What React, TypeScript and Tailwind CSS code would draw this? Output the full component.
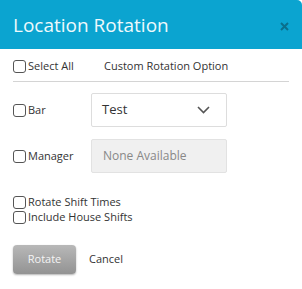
import React from "react";

function Box() {
  return <span className="inline-block w-[13px] h-[13px] border border-[#555] rounded-[3px] bg-white shrink-0" />;
}

export default function App() {
  return (
    <div className="w-[302px] h-[289px] bg-white relative overflow-hidden" style={{ fontFamily: '"Open Sans", sans-serif' }}>
      <div className="h-[49px] bg-[#0ba4d0] rounded-tr-[5px] flex items-center justify-between pl-[13px] pr-[12px]">
        <span className="text-[19px] text-[#eef9fc] leading-none pt-[1px]">Location Rotation</span>
        <svg width="9" height="9" viewBox="0 0 9 9" className="mt-[3px] mr-[1px]"><path d="M1 1l7 7M8 1l-7 7" stroke="#0b6f8c" strokeWidth="2" /></svg>
      </div>
      <div className="px-[13px]">
        <div className="flex items-center h-[33px] border-b border-[#d4d4d4] pt-[3px]">
          <div className="flex items-center w-[91px]">
            <Box />
            <span className="text-[11px] text-[#333] ml-[2px]">Select All</span>
          </div>
          <span className="text-[11px] text-[#333]">Custom Rotation Option</span>
        </div>
        <div className="flex items-center mt-[11px] h-[34px]">
          <div className="flex items-center w-[78px]">
            <Box />
            <span className="text-[11px] text-[#333] ml-[2px]">Bar</span>
          </div>
          <div className="w-[136px] h-[34px] border border-[#ddd] rounded-[2px] flex items-center justify-between pl-[10px] pr-[16px]">
            <span className="text-[13px] text-[#333]">Test</span>
            <svg width="13" height="8" viewBox="0 0 13 8"><path d="M1 1l5.5 5.5L12 1" fill="none" stroke="#555" strokeWidth="1.6" /></svg>
          </div>
        </div>
        <div className="flex items-center mt-[12px] h-[34px]">
          <div className="flex items-center w-[78px]">
            <Box />
            <span className="text-[11px] text-[#333] ml-[2px]">Manager</span>
          </div>
          <div className="w-[136px] h-[34px] border border-[#e2e2e2] bg-[#f0f0f0] rounded-[2px] flex items-center pl-[11px]">
            <span className="text-[12px] text-[#888]">None Available</span>
          </div>
        </div>
        <div className="mt-[22px] flex flex-col">
          <div className="flex items-center h-[15px]">
            <Box />
            <span className="text-[11px] text-[#333] ml-[2px]">Rotate Shift Times</span>
          </div>
          <div className="flex items-center h-[15px]">
            <Box />
            <span className="text-[11px] text-[#333] ml-[2px]">Include House Shifts</span>
          </div>
        </div>
        <div className="flex items-center mt-[20px]">
          <button className="w-[63px] h-[29px] rounded-[4px] bg-gradient-to-b from-[#b8b8b8] to-[#939393] shadow-[0_1px_2px_rgba(0,0,0,0.3)] text-[11px] text-[#f4f4f4]">Rotate</button>
          <span className="ml-[13px] text-[11px] text-[#333]">Cancel</span>
        </div>
      </div>
    </div>
  );
}
